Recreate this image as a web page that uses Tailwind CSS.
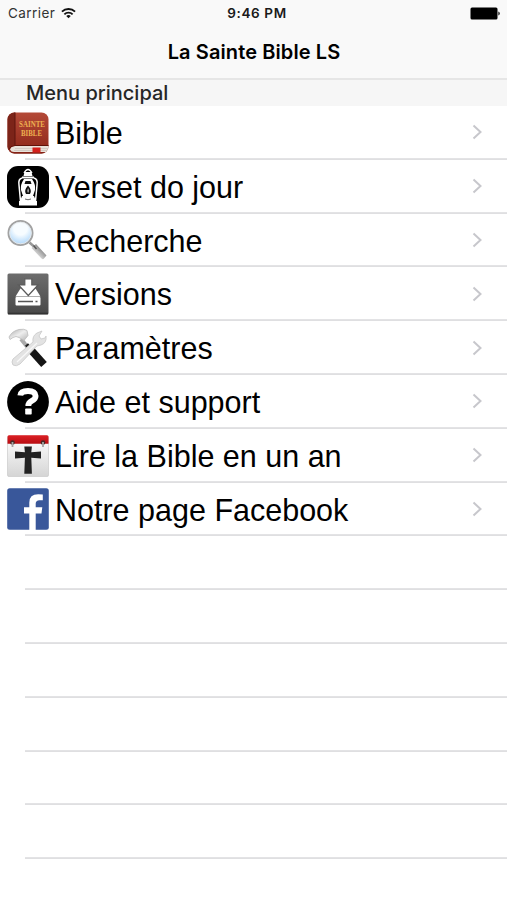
<!DOCTYPE html>
<html lang="fr">
<head>
    <meta charset="UTF-8">
    <meta name="viewport" content="width=device-width, initial-scale=1.0">
    <title>La Sainte Bible LS</title>
    <script src="https://cdn.jsdelivr.net/npm/@tailwindcss/browser@4"></script>
</head>
<body class="bg-white text-black h-[900px] overflow-hidden font-['Inter',sans-serif]">

    <!-- Status bar and title -->
    <header class="h-[80px] bg-[#f9f9f9] border-b-2 border-[#e6e6e6]">
        <div class="grid grid-cols-3 items-center h-[27px] pl-2 pr-[7px] text-[13.5px] leading-none">
            <div class="flex items-center gap-[6px] text-[#333] pt-px">
                <span class="tracking-[0.45px]">Carrier</span>
                <svg class="w-[15px] h-[12px] -mt-[2px]" viewBox="0 0 16 12" fill="none" stroke="#111" stroke-width="2">
                    <path d="M1 4.600a10 10 0 0 1 14 0M3.600 7.400a6.300 6.300 0 0 1 8.800 0"/>
                    <path d="M8 11.600L5.600 9.200a3.400 3.400 0 0 1 4.800 0z" fill="#111" stroke="none"/>
                </svg>
            </div>
            <div class="text-center font-semibold text-[#1a1a1a] whitespace-nowrap text-[13.5px] tracking-[0.65px] pl-[6px] pt-px">9:46 PM</div>
            <svg class="justify-self-end w-[30px] h-[13px]" viewBox="0 0 30 13">
                <rect x="0.5" y="0.5" width="27" height="12" rx="1.5" fill="#000"/>
                <path d="M28.300 4.500q1.500 .4 1.500 2t-1.500 2z" fill="#222"/>
            </svg>
        </div>
        <h1 class="text-center text-[20px] leading-[24px] font-semibold mt-[13px] pl-px tracking-[0.1px]">La Sainte Bible LS</h1>
    </header>

    <h2 class="h-[26px] bg-[#f6f6f6] pl-[26px] text-[20px] leading-[27px] font-medium text-[#262626]">Menu principal</h2>

    <!-- Menu -->
    <ul id="menu" class="font-['Liberation_Sans',Arial,sans-serif] text-[30.5px]">
        <li class="relative h-[53.8px] flex items-center pl-[7px] pr-[24px] gap-[6px]">
            <svg class="size-[42px]" viewBox="0 0 42 42">
                <defs>
                    <linearGradient id="cover" x1="0" y1="0" x2="0" y2="1"><stop offset="0" stop-color="#b44a38"/><stop offset="1" stop-color="#8c2517"/></linearGradient>
                    <clipPath id="book"><rect x="0.5" y="0.5" width="41" height="41" rx="7"/></clipPath>
                </defs>
                <g clip-path="url(#book)">
                    <rect width="42" height="42" fill="url(#cover)"/>
                    <path d="M0 0h8v33q-5 0-6 5l-2 0z" fill="#7c2419"/>
                    <path d="M8 0v33" stroke="#5c150e" stroke-width="1"/>
                    <path d="M42 34H8q-4 0-5 3.500q1 2.500 4 2.500h35z" fill="#e9e2da"/>
                    <path d="M42 33.500H8q-5 0-6 4" fill="none" stroke="#601208" stroke-width="1"/>
                    <path d="M8 36.500h34M7 38.500h35" stroke="#bdb5ad" stroke-width=".5"/>
                    <path d="M0 37q2 4 7 3.500h35v2H0z" fill="#7d1f14"/>
                    <path d="M25.500 35.500h8v5h-8z" fill="#d3201b"/>
                </g>
                <g fill="#eeb050" font-family="Liberation Serif, serif" font-weight="bold" text-anchor="middle">
                    <text x="25" y="15" font-size="8" textLength="26" lengthAdjust="spacingAndGlyphs">SAINTE</text>
                    <text x="24.500" y="23.500" font-size="8" textLength="21" lengthAdjust="spacingAndGlyphs">BIBLE</text>
                </g>
            </svg>
            <span class="grow pt-[2px]">Bible</span>
        </li>
        <li class="relative h-[53.8px] flex items-center pl-[7px] pr-[24px] gap-[6px]">
            <svg class="size-[42px]" viewBox="0 0 42 42">
                <rect x="0" y="0" width="42" height="42" rx="11" fill="#000"/>
                <path d="M17 7q4-7 8 0" fill="none" stroke="#fff" stroke-width="1.300"/>
                <path d="M17.500 6h7l1 4h-9zM15 10.500h12v2H15zM17 13h8q4 6 3 11l-2 6H16l-2-6q-1-5 3-11zM15 30h12l2 5H13zM12 35h18v4.500H12z" fill="#fff"/>
                <path d="M15 12q-4 1-3 7l1.500 16M27 12q4 1 3 7l-1.500 16" fill="none" stroke="#fff" stroke-width="1.500"/>
                <path d="M18.500 15h5l1 3h-7zM21 19.500q4.500 5 2 8.500h-4q-2.500-3.500 2-8.500z" fill="#111"/>
                <path d="M21 22q2 3 0 5-1.500-2 0-5z" fill="#aaa"/>
                <path d="M18 33q3 1.500 6 0" fill="none" stroke="#444" stroke-width=".8"/>
            </svg>
            <span class="grow pt-[2px]">Verset do jour</span>
        </li>
        <li class="relative h-[53.8px] flex items-center pl-[7px] pr-[24px] gap-[6px]">
            <svg class="size-[42px]" viewBox="0 0 42 42">
                <defs>
                    <radialGradient id="lens" cx=".5" cy=".3" r=".7"><stop offset="0.4" stop-color="#f7fcff"/><stop offset="1" stop-color="#a9d4fa"/></radialGradient>
                    <linearGradient id="handle" x1="0" y1="1" x2="1" y2="0"><stop offset=".3" stop-color="#ddd"/><stop offset=".7" stop-color="#888"/></linearGradient>
                </defs>
                <path d="M22.500 23.500l5 4.500" stroke="#999" stroke-width="2.500"/>
                <path d="M24.500 29l4.500-4 10.500 11.500-3 3.500q-1.500 .5-2.500-1z" fill="url(#handle)"/>
                <path d="M26.500 26.500l3 3.500" stroke="#555" stroke-width="1.500"/>
                <circle cx="13.500" cy="14" r="12" fill="url(#lens)" stroke="#a2a2a2" stroke-width="2"/>
                <circle cx="13.500" cy="14" r="10.800" fill="none" stroke="#e4e8eb" stroke-width="1"/>
            </svg>
            <span class="grow pt-[2px]">Recherche</span>
        </li>
        <li class="relative h-[53.8px] flex items-center pl-[7px] pr-[24px] gap-[6px]">
            <svg class="size-[42px]" viewBox="0 0 42 42">
                <defs><linearGradient id="tile" x1="0" y1="0" x2="0" y2="1"><stop offset="0" stop-color="#6d6d6d"/><stop offset="1" stop-color="#484848"/></linearGradient></defs>
                <rect x="0.500" y="0.500" width="41" height="41" rx="1.500" fill="url(#tile)"/>
                <path d="M1 40.500h40" stroke="#333" stroke-width="1.500"/>
                <path d="M13.500 15.500l-5 8h25l-5-8z" fill="#fff"/>
                <path d="M17.800 5.800h7v6.200h6.200l-9.700 10.500-9.800-10.500h6.300z" fill="#fff" stroke="#5a5a5a" stroke-width="1.200"/>
                <rect x="8.500" y="24" width="25" height="8.500" rx="1" fill="#fff"/>
                <path d="M11 28.500h15M28.500 28.500h2" stroke="#555" stroke-width="1.500"/>
            </svg>
            <span class="grow pt-[2px]">Versions</span>
        </li>
        <li class="relative h-[53.8px] flex items-center pl-[7px] pr-[24px] gap-[6px]">
            <svg class="size-[42px]" viewBox="0 0 42 42">
                <defs><linearGradient id="steel" x1="0" y1="0" x2="1" y2="1"><stop offset="0" stop-color="#aaa"/><stop offset=".5" stop-color="#eee"/><stop offset="1" stop-color="#b5b5b5"/></linearGradient></defs>
                <path d="M14 12l8 10" stroke="#aaa" stroke-width="4"/>
                <path d="M2 10q3-6 10-7.500 5-1 8 1l1 5-4 5-5-3q-3-2-6 0l-3 2z" fill="url(#steel)" stroke="#bbb" stroke-width=".8"/>
                <path d="M19.500 17.500l5 5.500" stroke="#222" stroke-width="4"/>
                <path d="M24 23l13 14.500" stroke="#151515" stroke-width="7.500"/>
                <path d="M6 32l20-17q-1-6 4-9l5-2-3 5 2 3 4-1 1-2q1 7-5 9l-4 1-17 18q-4 3-7 1-2-3 0-6z" fill="#e3e3e3" stroke="#c8c8c8" stroke-width=".8"/>
                <path d="M10 35l20-19" stroke="#f8f8f8" stroke-width="1.200"/>
            </svg>
            <span class="grow pt-[2px]">Paramètres</span>
        </li>
        <li class="relative h-[53.8px] flex items-center pl-[7px] pr-[24px] gap-[6px]">
            <svg class="size-[42px]" viewBox="0 0 42 42">
                <circle cx="21" cy="21" r="20.900" fill="#000"/>
                <path d="M13.300 14.500q.5-4.500 7.700-4.500t7.600 5q0 3-3.800 4.800-3.500 1.700-3.500 5.200" fill="none" stroke="#fff" stroke-width="5.800"/>
                <rect x="18.200" y="27.500" width="6.500" height="6" rx=".8" fill="#fff"/>
            </svg>
            <span class="grow pt-[2px]">Aide et support</span>
        </li>
        <li class="relative h-[53.8px] flex items-center pl-[7px] pr-[24px] gap-[6px]">
            <svg class="size-[42px]" viewBox="0 0 42 42">
                <defs>
                    <linearGradient id="page" x1="0" y1="0" x2="0" y2="1"><stop offset="0" stop-color="#fff"/><stop offset="1" stop-color="#d5d5d5"/></linearGradient>
                    <linearGradient id="band" x1="0" y1="0" x2="0" y2="1"><stop offset="0" stop-color="#dc2025"/><stop offset="1" stop-color="#b80d12"/></linearGradient>
                </defs>
                <rect x="0.500" y="1" width="41" height="40.500" rx="1.500" fill="url(#page)" stroke="#c5c5c5" stroke-width=".6"/>
                <path d="M2 0.300h38q1.500 0 1.500 1.500v7h-41v-7q0-1.500 1.500-1.500z" fill="url(#band)"/>
                <g fill="#4a2826"><circle cx="5.500" cy="7.500" r="2.300"/><circle cx="36" cy="7.500" r="2.300"/></g>
                <path d="M5.500 7v5M36 7v5" stroke="#a5a5a5" stroke-width="1.800"/>
                <path d="M17.300 11.500h7.600l-.6 5.800 9.700-.8v7l-9.700-.8.600 16h-7.600l.6-16-9.900.8v-7l9.900.8z" fill="#222"/>
            </svg>
            <span class="grow pt-[2px]">Lire la Bible en un an</span>
        </li>
        <li class="relative h-[53.8px] flex items-center pl-[7px] pr-[24px] gap-[6px]">
            <svg class="size-[42px]" viewBox="0 0 42 42">
                <rect x="0.200" y="0.200" width="41.600" height="41.600" rx="2.500" fill="#39579a"/>
                <path d="M22.300 42V25.500H17v-6.300h5.300v-4.700q0-8.300 8.900-8.300 2.600 0 4.600.3v5.700h-3.300q-3.800 0-3.800 3.500v3.500h6.600l-.8 6.300h-5.800V42z" fill="#fff"/>
            </svg>
            <span class="grow pt-[2px]">Notre page Facebook</span>
        </li>
        <li class="relative h-[53.8px]"></li>
        <li class="relative h-[53.8px]"></li>
        <li class="relative h-[53.8px]"></li>
        <li class="relative h-[53.8px]"></li>
        <li class="relative h-[53.8px]"></li>
        <li class="relative h-[53.8px]"></li>
    </ul>

    <!-- Row parts shared by every item -->
    <template id="chevron">
        <svg class="w-[11px] h-[16px] -mt-px" viewBox="0 0 11 16" fill="none" stroke="#c7c7cc" stroke-width="2"><path d="M1.500 1.500L8.500 8l-7 6.500"/></svg>
    </template>
    <template id="separator">
        <svg class="absolute left-[25px] bottom-0 w-[482px] h-[2px]" viewBox="0 0 482 2"><rect y="0.300" width="482" height="1.500" fill="#d8d8da"/></svg>
    </template>

    <script>
        const chevron = document.getElementById('chevron');
        const separator = document.getElementById('separator');

        document.querySelectorAll('#menu li').forEach((row) => {
            if (row.children.length) {
                row.appendChild(chevron.content.cloneNode(true));
            }
            row.appendChild(separator.content.cloneNode(true));
        });
    </script>
</body>
</html>
